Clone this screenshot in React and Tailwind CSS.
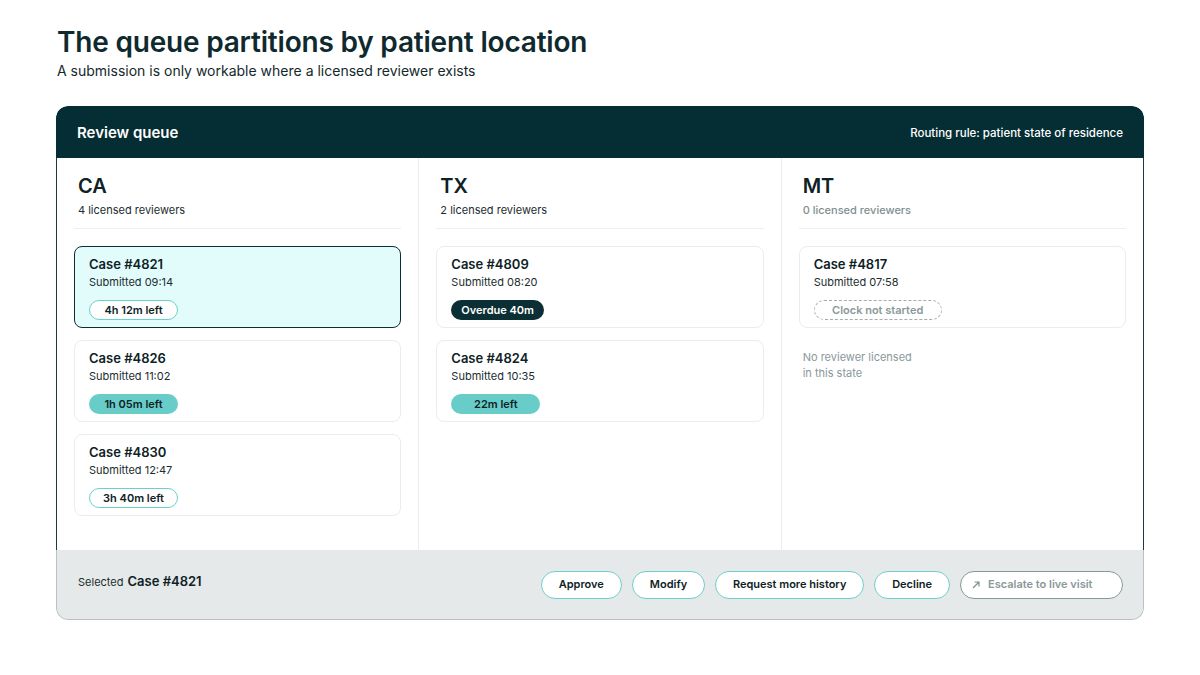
import React from "react";

const font = { fontFamily: "Inter, 'Noto Sans', sans-serif" };

function Badge({ kind, children }) {
  const base = "inline-flex items-center justify-center h-[20px] rounded-full text-[11px] font-semibold leading-none";
  if (kind === "outline")
    return <span className={`${base} w-[89px] bg-white border-[1.5px] border-[#6ccfcb] text-[#0e2225]`}>{children}</span>;
  if (kind === "teal")
    return <span className={`${base} w-[89px] bg-[#68cdc9] text-[#0e2225]`}>{children}</span>;
  if (kind === "dark")
    return <span className={`${base} px-[10px] bg-[#0b2f34] text-white`}>{children}</span>;
  return (
    <span className={`${base} w-[128px] border-[1.5px] border-dashed border-[#a3adae] text-[#8a9899]`}>{children}</span>
  );
}

function Card({ id, time, badge, kind, selected }) {
  return (
    <div
      className={`rounded-[8px] border px-[14px] pt-[8px] pb-[7px] ${
        selected ? "bg-[#e2fbfb] border-[#0b2f34]" : "bg-white border-[#eaeded]"
      }`}
    >
      <div className="text-[13px] leading-[18px] font-semibold text-[#0e2225]">{id}</div>
      <div className="mt-[1px] text-[11px] leading-[16px] text-[#1b2d30]">{time}</div>
      <div className="mt-[10px] flex">
        <Badge kind={kind}>{badge}</Badge>
      </div>
    </div>
  );
}

function Column({ code, count, muted, cards, note, last }) {
  return (
    <div className={`flex-1 px-[17px] pt-[16px] ${last ? "" : "border-r border-[#eceeee]"}`}>
      <div className="px-[4px] pb-[10px] border-b border-[#eef0f0]">
        <div className="text-[20px] leading-[24px] font-semibold text-[#0e2225]">{code}</div>
        <div className={`mt-[4px] text-[11px] leading-[16px] ${muted ? "text-[#7e8f91] font-medium" : "text-[#1b2d30]"}`}>
          {count}
        </div>
      </div>
      <div className="mt-[17px] flex flex-col gap-[12px]">
        {cards.map((c) => (
          <Card key={c.id} {...c} />
        ))}
      </div>
      {note && (
        <div className="mt-[21px] px-[4px] text-[11px] leading-[16px] text-[#8a9899]">
          No reviewer licensed
          <br />
          in this state
        </div>
      )}
    </div>
  );
}

function Btn({ children }) {
  return (
    <button className="h-[28px] px-[17px] rounded-full bg-white border-[1.5px] border-[#6ccfcb] text-[11px] font-semibold text-[#0e2225]">
      {children}
    </button>
  );
}

export default function App() {
  return (
    <div className="w-[1200px] h-[675px] bg-white" style={font}>
      <div className="pl-[57px] pt-[26px]">
        <h1 className="text-[28px] leading-[32px] font-semibold text-[#0f2a2e] tracking-[-0.2px]">
          The queue partitions by patient location
        </h1>
        <p className="mt-[3px] text-[14px] leading-[20px] text-[#13282b]">
          A submission is only workable where a licensed reviewer exists
        </p>
      </div>
      <div className="mx-[56px] mt-[25px] rounded-[12px] overflow-hidden">
        <div className="h-[52px] pt-[3px] bg-[#042e33] rounded-t-[12px] flex items-center justify-between px-[21px]">
          <span className="text-[15px] font-semibold text-white">Review queue</span>
          <span className="text-[11.5px] font-medium text-white">Routing rule: patient state of residence</span>
        </div>
        <div className="h-[392px] flex border-x border-[#1e3a3e] bg-white">
          <Column
            code="CA"
            count="4 licensed reviewers"
            cards={[
              { id: "Case #4821", time: "Submitted 09:14", badge: "4h 12m left", kind: "outline", selected: true },
              { id: "Case #4826", time: "Submitted 11:02", badge: "1h 05m left", kind: "teal" },
              { id: "Case #4830", time: "Submitted 12:47", badge: "3h 40m left", kind: "outline" },
            ]}
          />
          <Column
            code="TX"
            count="2 licensed reviewers"
            cards={[
              { id: "Case #4809", time: "Submitted 08:20", badge: "Overdue 40m", kind: "dark" },
              { id: "Case #4824", time: "Submitted 10:35", badge: "22m left", kind: "teal" },
            ]}
          />
          <Column
            code="MT"
            count="0 licensed reviewers"
            muted
            last
            note
            cards={[{ id: "Case #4817", time: "Submitted 07:58", badge: "Clock not started", kind: "dashed" }]}
          />
        </div>
        <div className="h-[70px] bg-[#e5e9e9] border border-t-0 border-[#b9c2c3] rounded-b-[12px] flex items-center justify-between pl-[21px] pr-[20px]">
          <div className="flex items-baseline gap-[4px] mb-[6px]">
            <span className="text-[11px] text-[#1b2d30]">Selected</span>
            <span className="text-[13px] font-semibold text-[#0e2225]">Case #4821</span>
          </div>
          <div className="flex items-center gap-[10px]">
            <Btn>Approve</Btn>
            <Btn>Modify</Btn>
            <span className="w-[149px] flex"><button className="w-full h-[28px] rounded-full bg-white border-[1.5px] border-[#6ccfcb] text-[11px] font-semibold text-[#0e2225]">Request more history</button></span>
            <Btn>Decline</Btn>
            <button className="w-[163px] h-[28px] pl-[10px] rounded-full bg-white border-[1.5px] border-[#87979a] text-[11px] font-semibold text-[#8a9899] flex items-center gap-[7px]">
              <svg width="10" height="10" viewBox="0 0 10 10" fill="none" stroke="#7e8f91" strokeWidth="1.2">
                <path d="M2 8 L8 2 M3.5 2 H8 V6.5" />
              </svg>
              Escalate to live visit
            </button>
          </div>
        </div>
      </div>
    </div>
  );
}
